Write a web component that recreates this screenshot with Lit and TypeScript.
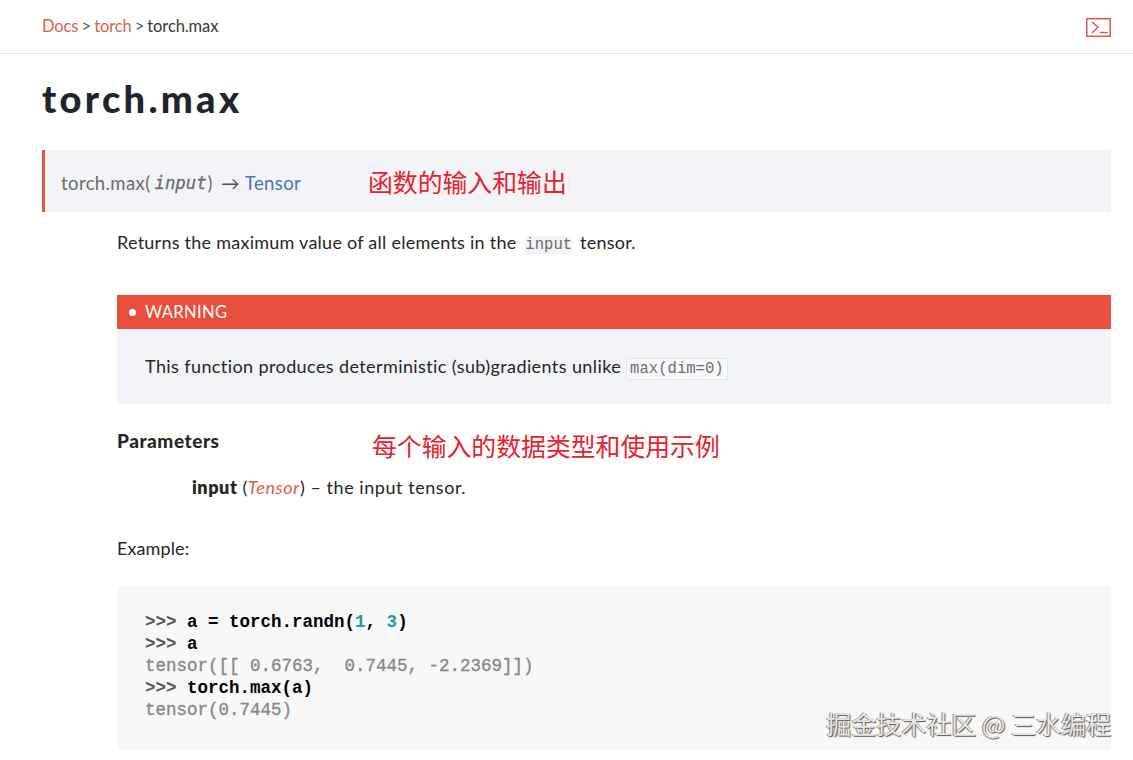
import { LitElement, html, css } from "lit";
import { customElement } from "lit/decorators.js";

@customElement("app-root")
export class AppRoot extends LitElement {
  static styles = css`
    :host { display: block; height: 760px; overflow: hidden; position: relative; background: #fff; color: #262626;
      font-family: Lato, "Noto Sans CJK SC", sans-serif; font-size: 18px; letter-spacing: 0.25px; }
    .topbar { height: 54px; box-sizing: border-box; border-bottom: 1px solid #e5e5e5; padding: 0 22px 1px 42px;
      display: flex; align-items: center; justify-content: space-between; font-size: 16.5px; letter-spacing: -0.1px; word-spacing: -1px; color: #555; }
    .crumbs a { color: #e0614a; }
    .crumbs .cur { color: #3a3a3a; }
    .term { display: block; margin-top: 2px; }
    main { padding: 0 22px 0 42px; }
    h1 { margin: 22px 0 30px; font-size: 38px; line-height: 44px; font-weight: 900; letter-spacing: 3.3px; color: #212529; }
    .sig { position: relative; height: 62px; box-sizing: border-box; border-left: 3px solid #e2563f; background: #f3f4f7;
      padding: 3px 0 0 16px; display: flex; align-items: center; font-size: 18.5px; letter-spacing: 0.4px; color: #6c6c6d; }
    .sig i { font-family: "DejaVu Sans Mono", monospace; font-size: 17.3px; letter-spacing: 0; -webkit-text-stroke: 0.3px #6c6c6d; padding: 0 1px 0 4px; }
    .sig .arrow { margin: 0 5px 0 8px; color: #555; }
    .sig a { color: #4c6fc4; }
    .note { position: absolute; color: #e5222e; font-size: 24.85px; letter-spacing: 0; line-height: 30px; font-family: "Noto Sans CJK SC", sans-serif; }
    .note.a { left: 323px; top: 16px; }
    .body { padding-left: 75px; }
    p { margin: 0; }
    .lead { margin-top: 19px; line-height: 22px; }
    code { font-family: "Liberation Mono", monospace; font-size: 15.6px; letter-spacing: 0; color: #6c6c6d; }
    .lead code { background: #f3f4f7; padding: 0; margin: 0 3px 0 4px; }
    .warn { margin-top: 39px; background: #f3f4f7; height: 109px; }
    .warn-h { height: 34px; background: #e84f3c; color: #fff; display: flex; align-items: center; padding-left: 12px; gap: 9px; font-size: 16.5px; letter-spacing: 0.4px; }
    .dot { width: 7px; height: 7px; border-radius: 50%; background: #fff; }
    .warn-b { padding: 26px 28px 0; line-height: 22px; letter-spacing: 0.4px; }
    .warn-b code { border: 1px solid #e6e7ea; background: #f8f9fb; padding: 1px 3px; margin-left: 0; }
    .params { position: relative; margin-top: 26px; }
    .params h4 { margin: 0; font-size: 19px; line-height: 22px; font-weight: 900; letter-spacing: 0.55px; color: #262626; }
    .note.b { left: 255px; top: 0; }
    .param { margin: 24px 0 0 75px; line-height: 22px; letter-spacing: 0.55px; }
    .param b { font-weight: 800; }
    .param em { color: #e2613f; }
    .ex { margin-top: 39px; line-height: 22px; letter-spacing: 0.1px; }
    pre { margin: 27px 0 0; height: 164px; box-sizing: border-box; background: #f8f8f8; padding: 25px 28px 0;
      font-family: "Liberation Mono", monospace; font-size: 17.5px; letter-spacing: 0; line-height: 22px; color: #888; -webkit-text-stroke: 0.35px #888; }
    pre b { color: #000; font-weight: 700; -webkit-text-stroke: 0; }
    pre .p { color: #555; font-weight: 700; -webkit-text-stroke: 0; }
    pre .n { color: #1a9fa5; font-weight: 700; -webkit-text-stroke: 0; }
    .mark { position: absolute; right: 22px; top: 707px; font-family: "Noto Sans CJK SC", sans-serif; font-size: 25px; letter-spacing: 0; line-height: 32px;
      color: #e8e8e8; text-shadow: 1px 1px 1px #555, -1px 0 0 #888; }
  `;

  render() {
    return html`
      <header class="topbar">
        <div class="crumbs"><a>Docs</a> &gt; <a>torch</a> &gt; <span class="cur">torch.max</span></div>
        <svg class="term" width="25" height="19" viewBox="0 0 25 19" fill="none" stroke="#e2563f">
          <rect x="0.75" y="0.75" width="23.5" height="17.5" stroke-width="1.5"></rect>
          <path d="M6 4 L12 9 L6 15" stroke-width="1.4"></path>
          <path d="M13.5 14.5 H21.5" stroke-width="1.4"></path>
        </svg>
      </header>
      <main>
        <h1>torch.max</h1>
        <div class="sig">
          <span>torch.max</span><span>(</span><i>input</i><span>)</span><span class="arrow">→</span><a>Tensor</a>
          <div class="note a">函数的输入和输出</div>
        </div>
        <div class="body">
          <p class="lead">Returns the maximum value of all elements in the <code>input</code> tensor.</p>
          <div class="warn">
            <div class="warn-h"><span class="dot"></span><span>WARNING</span></div>
            <div class="warn-b">This function produces deterministic (sub)gradients unlike <code>max(dim=0)</code></div>
          </div>
          <div class="params">
            <h4>Parameters</h4>
            <div class="note b">每个输入的数据类型和使用示例</div>
            <div class="param"><b>input</b> (<em>Tensor</em>) – the input tensor.</div>
          </div>
          <p class="ex">Example:</p>
          <pre><span class="p">&gt;&gt;&gt;</span> <b>a = torch.randn(</b><span class="n">1</span><b>,</b> <span class="n">3</span><b>)</b>
<span class="p">&gt;&gt;&gt;</span> <b>a</b>
tensor([[ 0.6763,  0.7445, -2.2369]])
<span class="p">&gt;&gt;&gt;</span> <b>torch.max(a)</b>
tensor(0.7445)</pre>
        </div>
      </main>
      <div class="mark">掘金技术社区 @ 三水编程</div>
    `;
  }
}
